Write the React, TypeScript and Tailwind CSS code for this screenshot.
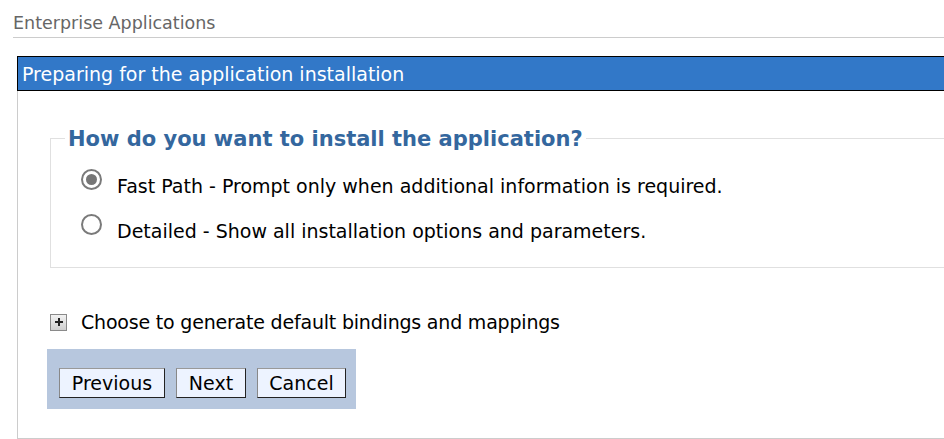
import { useState } from "react";

const font = { fontFamily: '"DejaVu Sans", Verdana, sans-serif' };

function Radio({ checked, onClick }: { checked: boolean; onClick: () => void }) {
  return (
    <button
      type="button"
      onClick={onClick}
      className="mb-[12px] flex h-[21px] w-[21px] shrink-0 items-center justify-center rounded-full border-2 border-[#7a7a7a] bg-white"
    >
      {checked && <span className="h-[11px] w-[11px] rounded-full bg-[#767676]" />}
    </button>
  );
}

export default function App() {
  const [mode, setMode] = useState("fast");

  const options = [
    { id: "fast", label: "Fast Path - Prompt only when additional information is required." },
    { id: "detailed", label: "Detailed - Show all installation options and parameters." },
  ];

  return (
    <div className="h-[439px] w-[944px] overflow-hidden bg-white text-[19px] text-black" style={font}>
      {/* Page title */}
      <div className="ml-[13px] h-[38px] border-b border-[#cccccc] pt-[12px] text-[17.5px] leading-[22px] text-[#666666]">
        Enterprise Applications
      </div>

      <div className="ml-[17px] mt-[18px] h-[383px] w-[1000px] border-b border-l border-[#cccccc]">
        {/* Section header */}
        <div className="-ml-px flex h-[35px] items-center border-y border-l border-black bg-[#3278c8] pl-[4px] leading-[22px] text-white">
          Preparing for the application installation
        </div>

        <div className="pl-[32px]">
          <fieldset className="mt-[34px] w-[960px] border border-[#e0e0e0] pb-[14px]">
            <legend className="ml-[14px] px-[3px] pt-[2px] text-[21px] font-bold leading-[24px] text-[#34679e]">
              How do you want to install the application?
            </legend>
            <div className="pt-[12px] pl-[30px]">
              {options.map((o) => (
                <div key={o.id} className="flex h-[45px] items-center gap-[15px]">
                  <Radio checked={mode === o.id} onClick={() => setMode(o.id)} />
                  <span className="leading-[22px]">{o.label}</span>
                </div>
              ))}
            </div>
          </fieldset>

          <div className="mt-[44px] flex h-[20px] items-center gap-[14px]">
            <span className="flex h-[17px] w-[17px] items-center justify-center border border-[#8a8a8a] bg-gradient-to-b from-[#f2f2f2] to-[#cfcfcf]">
              <svg width="10" height="10" viewBox="0 0 10 10">
                <path d="M5 1v8M1 5h8" stroke="#222" strokeWidth="2" />
              </svg>
            </span>
            <span className="leading-[22px] tracking-[-0.2px]">Choose to generate default bindings and mappings</span>
          </div>

          <div className="-ml-[3px] mt-[17px] flex h-[60px] w-[309px] gap-[11px] bg-[#b7c7de] pl-[12px] pt-[19px]">
            {[
              { label: "Previous", w: "w-[106px]" },
              { label: "Next", w: "w-[70px]" },
              { label: "Cancel", w: "w-[89px]" },
            ].map((b) => (
              <button
                key={b.label}
                type="button"
                className={`${b.w} h-[30px] border border-b-[#222] border-l-[#888] border-r-[#222] border-t-[#999] bg-[#edf3ff] leading-[22px]`}
              >
                {b.label}
              </button>
            ))}
          </div>
        </div>
      </div>
    </div>
  );
}
